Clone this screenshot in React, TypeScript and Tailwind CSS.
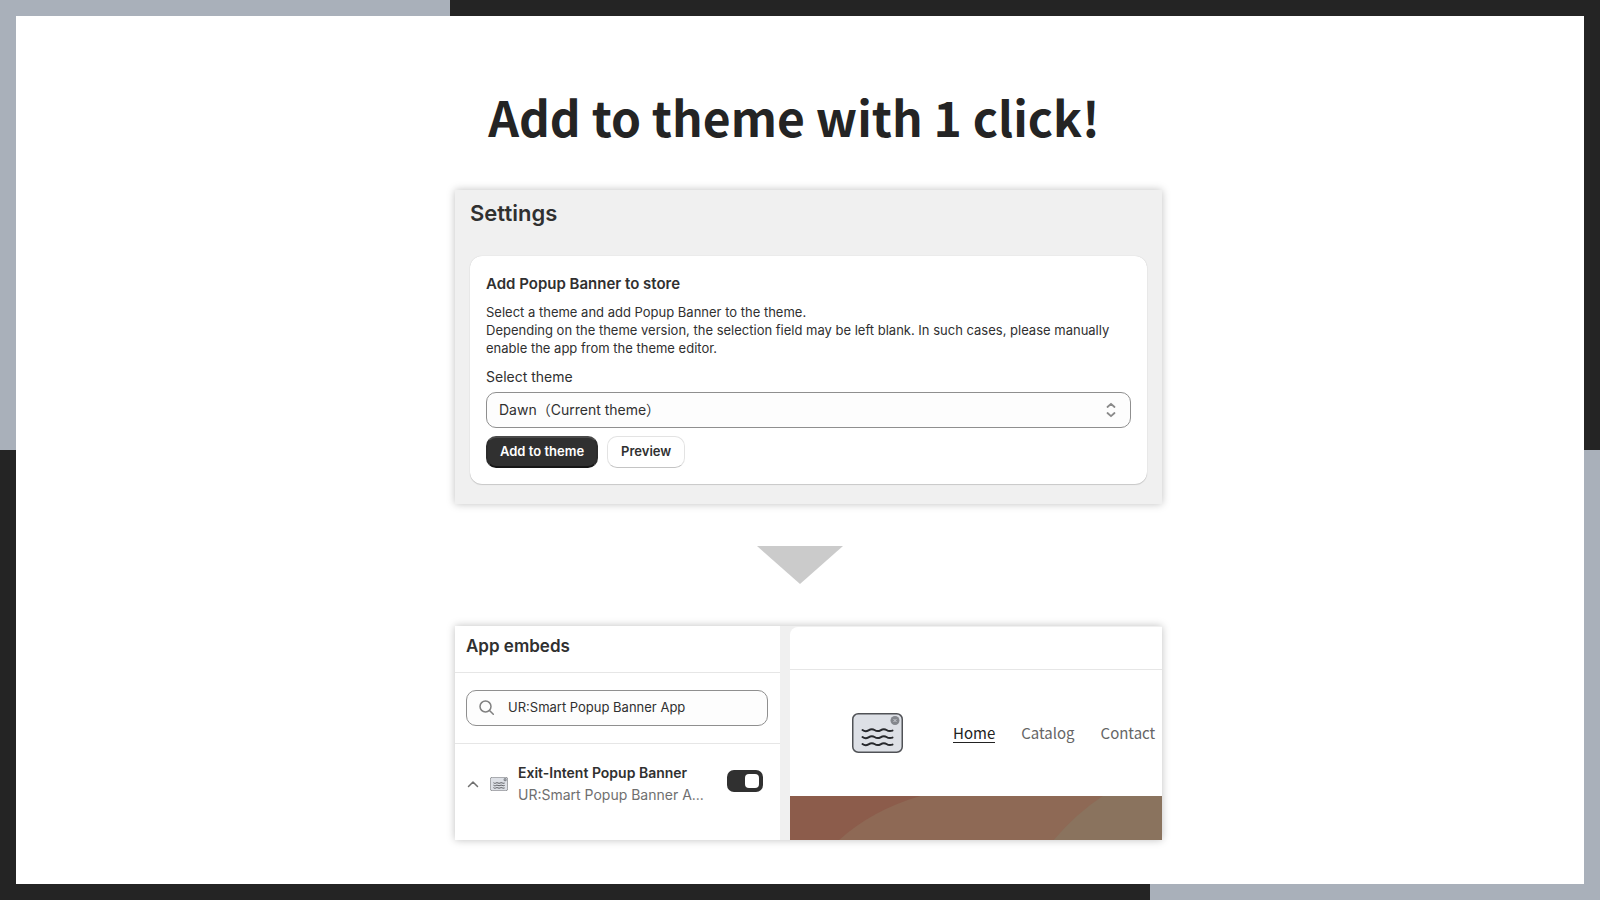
import { useState } from 'react';

function PopupLogo({ className }: { className: string }) {
  return (
    <svg viewBox="0 0 51 40" className={className} fill="none" aria-hidden="true">
      <rect x="0.75" y="0.75" width="49.5" height="38.5" rx="5.5" fill="#dde0e6" stroke="#505256" strokeWidth="1.5" />
      <circle cx="43" cy="7.5" r="4.5" fill="#84878d" />
      <path d="M41.5 6l3 3M44.5 6l-3 3" stroke="#c9ccd2" strokeWidth="1" />
      <g stroke="#26282c" strokeWidth="2" strokeLinecap="round">
        <path d="M10.5 17c2 1.5 4 1.5 6 .3s4-1.6 6-.3 4 1.5 6 .3 4-1.6 6-.3 4 1.2 6 .6" />
        <path d="M10.5 24c2 1.5 4 1.5 6 .3s4-1.6 6-.3 4 1.5 6 .3 4-1.6 6-.3 4 1.2 6 .6" />
        <path d="M10.5 31c2 1.5 4 1.5 6 .3s4-1.6 6-.3 4 1.5 6 .3 4-1.6 6-.3 4 1.2 6 .6" />
      </g>
    </svg>
  );
}

function SettingsCard() {
  const [theme, setTheme] = useState('dawn');

  return (
    <section className="w-full bg-[#f0f0f0] px-[15px] pt-[11px] pb-5 shadow-[0_0_8px_rgba(0,0,0,0.25)]">
      <h2 className="text-[22px] leading-6 font-semibold">Settings</h2>
      <div className="mt-[31px] rounded-xl bg-white p-4 shadow-[0_1px_1px_rgba(0,0,0,0.15),0_0_1px_rgba(0,0,0,0.2)]">
        <h3 className="text-[15px] leading-6 font-semibold">Add Popup Banner to store</h3>
        <p className="mt-[7px] text-[13px] leading-[18px]">
          Select a theme and add Popup Banner to the theme.
          <br />
          Depending on the theme version, the selection field may be left blank. In such cases, please manually enable
          the app from the theme editor.
        </p>
        <label htmlFor="theme" className="mt-2 block text-sm leading-6">
          Select theme
        </label>
        <div className="relative mt-[3px]">
          <select
            id="theme"
            value={theme}
            onChange={(e) => setTheme(e.target.value)}
            className="h-9 w-full appearance-none rounded-[10px] border border-[#8f8f8f] bg-[#fdfdfd] px-3 text-sm"
          >
            <option value="dawn">Dawn（Current theme）</option>
          </select>
          <svg
            viewBox="0 0 10 16"
            className="pointer-events-none absolute top-[10px] right-[15px] h-4 w-[10px]"
            fill="none"
            stroke="#8a8a8a"
            strokeWidth="1.8"
            strokeLinecap="round"
            strokeLinejoin="round"
            aria-hidden="true"
          >
            <path d="M1.5 5L5 1.8 8.5 5M1.5 11L5 14.2 8.5 11" />
          </svg>
        </div>
        <div className="mt-2 flex gap-[9px]">
          <button className="h-8 rounded-[10px] border-2 border-x-[#2c2c2c] border-t-[#4a4a4a] border-b-[#161616] bg-[#303030] px-3 text-[13px] font-semibold text-white">
            Add to theme
          </button>
          <button className="h-8 rounded-[10px] border border-[#e3e3e3] border-b-[#c4c4c4] bg-white px-[13px] text-[13px] font-semibold">
            Preview
          </button>
        </div>
      </div>
    </section>
  );
}

function EmbedsPanel() {
  const [search, setSearch] = useState('UR:Smart Popup Banner App');
  const [enabled, setEnabled] = useState(true);

  return (
    <div className="w-[325px] shrink-0 bg-white">
      <h2 className="px-[11px] pt-2 pb-[14px] text-[17px] leading-6 font-semibold">App embeds</h2>
      <div className="border-y border-[#e6e6e6] px-[11px] py-[17px]">
        <label className="flex h-9 w-[302px] items-center gap-[13px] rounded-[10px] border border-[#8f8f8f] bg-[#fdfdfd] px-3">
          <svg viewBox="0 0 16 16" className="size-4 shrink-0" fill="none" stroke="#808080" strokeWidth="1.5" strokeLinecap="round" aria-hidden="true">
            <circle cx="6.5" cy="6.5" r="5.5" />
            <path d="M10.5 10.5l3.8 3.8" />
          </svg>
          <input
            type="text"
            aria-label="Search app embeds"
            value={search}
            onChange={(e) => setSearch(e.target.value)}
            className="w-full min-w-0 bg-transparent text-[13px] outline-none"
          />
        </label>
      </div>
      <div className="flex items-center pt-[18px] pr-[17px] pl-3">
        <button aria-label="Collapse" className="mr-[11px]">
          <svg viewBox="0 0 12 8" className="h-2 w-3" fill="none" stroke="#707070" strokeWidth="1.5" strokeLinecap="round" strokeLinejoin="round">
            <path d="M1.5 6.5L6 2l4.500 4.500" />
          </svg>
        </button>
        <PopupLogo className="mr-[10px] h-[14px] w-[18px]" />
        <div className="min-w-0 grow">
          <h3 className="text-sm leading-[22px] font-semibold">Exit-Intent Popup Banner</h3>
          <p className="text-sm leading-[22px] text-[#6f6f6f]">UR:Smart Popup Banner A...</p>
        </div>
        <label className="mb-1.5 flex">
          <input
            type="checkbox"
            aria-label="Exit-Intent Popup Banner"
            checked={enabled}
            onChange={(e) => setEnabled(e.target.checked)}
            className="peer sr-only"
          />
          <span className="flex h-[22px] w-9 items-center rounded-[7px] bg-[#8a8a8a] p-1 peer-checked:justify-end peer-checked:bg-[#303030]">
            <span className="size-[14px] rounded bg-white" />
          </span>
        </label>
      </div>
    </div>
  );
}

function StorePreview() {
  return (
    <div className="ml-[10px] flex min-w-0 grow flex-col">
      <div className="mt-px h-[42px] rounded-tl-lg bg-white" />
      <header className="flex h-[127px] items-center border-t border-[#e6e6e6] bg-white pl-[62px]">
        <PopupLogo className="h-10 w-[51px] shrink-0" />
        <nav className="ml-[50px] flex gap-[26px] font-['Noto_Sans_CJK_JP',sans-serif] text-[15px] leading-[18px] text-[#666]">
          <a href="#home" className="border-b border-[#222] text-[#222]">
            Home
          </a>
          <a href="#catalog">Catalog</a>
          <a href="#contact">Contact</a>
        </nav>
      </header>
      <svg viewBox="0 0 371 44" preserveAspectRatio="none" className="h-11 w-full grow" aria-hidden="true">
        <rect width="371" height="44" fill="#8c5c4b" />
        <path d="M49 44Q82 14 130 0H371V44Z" fill="#8e6955" />
        <path d="M263 44Q286 17 312 0H371V44Z" fill="#8a735e" />
      </svg>
    </div>
  );
}

export default function App() {
  return (
    <div className="min-h-screen bg-[#242424] bg-[linear-gradient(#a9b0ba,#a9b0ba),linear-gradient(#a9b0ba,#a9b0ba)] bg-[length:450px_450px] bg-[position:0_0,100%_100%] bg-no-repeat p-4 font-[Inter,'Noto_Sans_CJK_JP',sans-serif] text-[#303030]">
      <main className="flex min-h-[calc(100vh-32px)] flex-col items-center bg-white px-4 pt-[70px] pb-11">
        <h1 className="pr-3 font-['Noto_Sans_CJK_JP',sans-serif] text-5xl leading-[60px] font-bold text-[#242424]">
          Add to theme with 1 click!
        </h1>
        <div className="mt-11 w-full max-w-[724px] pl-[17px]">
          <SettingsCard />
        </div>
        <svg viewBox="0 0 86 38" className="my-[42px] h-[38px] w-[86px]" aria-hidden="true">
          <path d="M0 0H86L43 38Z" fill="#cbcbcb" />
        </svg>
        <div className="w-full max-w-[724px] pl-[17px]">
          <section className="flex min-h-[214px] bg-[#f0f0f0] shadow-[0_0_8px_rgba(0,0,0,0.25)]">
            <EmbedsPanel />
            <StorePreview />
          </section>
        </div>
      </main>
    </div>
  );
}
